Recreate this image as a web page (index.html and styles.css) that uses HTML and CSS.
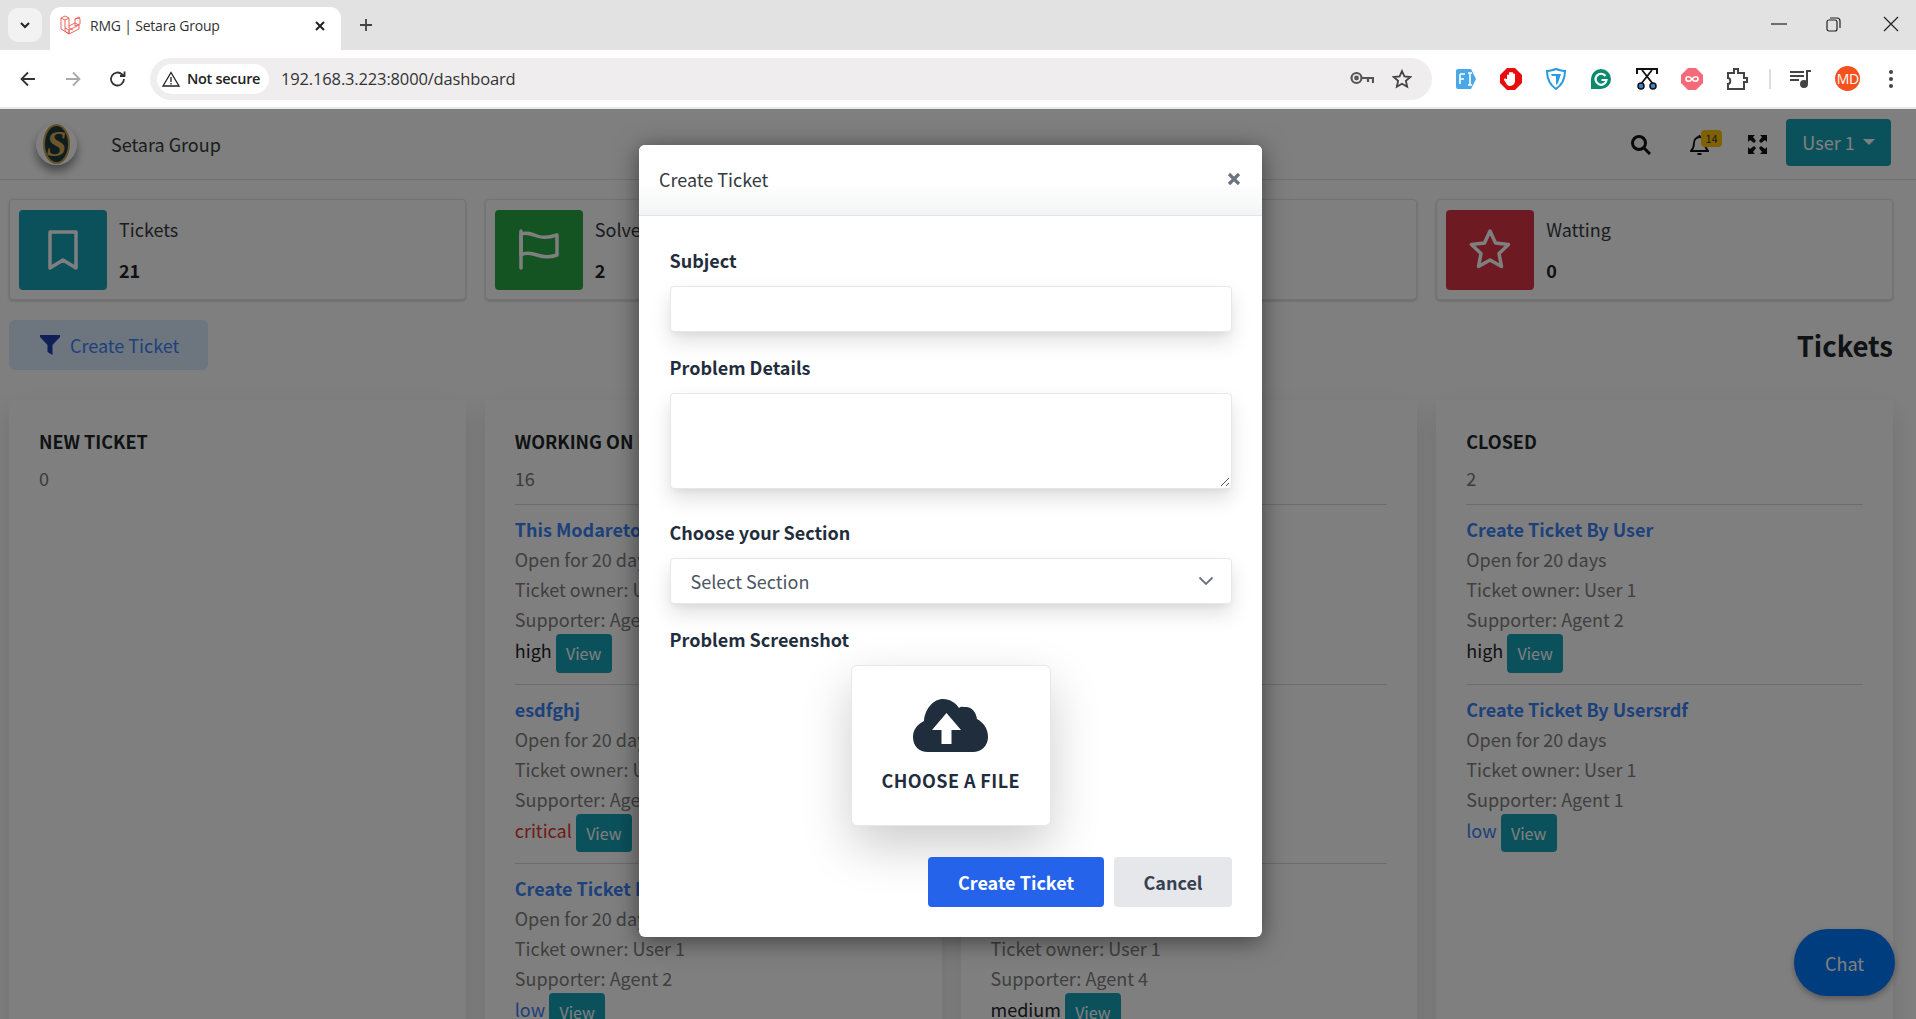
FILE: index.html
```html
<!DOCTYPE html>
<html lang="en">
<head>
<meta charset="utf-8">
<title>RMG | Setara Group</title>
<link rel="stylesheet" href="styles.css">
</head>
<body>
<header class="browser">
  <div class="tabstrip">
    <button class="tab-list"><svg width="14" height="14" viewBox="0 0 14 14"><path d="M3 5l4 4 4-4" fill="none" stroke="#222" stroke-width="2"/></svg></button>
    <div class="tab">
      <svg class="favicon" width="21" height="21" viewBox="0 0 21 21" fill="none" stroke="#f0635a" stroke-width="1"><path d="M1 3l4-2 4 2v10l4 2 M1 3v11l8 5 10-5v-4 M5 1v0M1 3l4 2 4-2M5 5v11l4 3v-4l-4-2M9 19v-4l10-5-4-2-6 3M15 4l4-2 1 2v5l-5 2V4l5-1"/></svg>
      <span class="tab-title">RMG | Setara Group</span>
      <svg class="tab-close" width="12" height="12" viewBox="0 0 12 12"><path d="M2 2l8 8M10 2l-8 8" stroke="#222" stroke-width="2"/></svg>
    </div>
    <svg class="new-tab" width="16" height="16" viewBox="0 0 16 16"><path d="M8 2v12M2 8h12" stroke="#444" stroke-width="1.8"/></svg>
    <div class="window-controls">
      <svg width="18" height="18" viewBox="0 0 18 18"><path d="M1 9h16" stroke="#222" stroke-width="1.2"/></svg>
      <svg width="18" height="18" viewBox="0 0 18 18" fill="none" stroke="#222" stroke-width="1.2"><rect x="3" y="5" width="10" height="11" rx="2"/><path d="M6 3h7a3 3 0 0 1 3 3v7"/></svg>
      <svg width="18" height="18" viewBox="0 0 18 18"><path d="M2 2l14 14M16 2L2 16" stroke="#222" stroke-width="1.2"/></svg>
    </div>
  </div>
  <div class="toolbar">
    <svg class="nav-ico" width="20" height="20" viewBox="0 0 20 20" fill="none" stroke="#333" stroke-width="1.8"><path d="M17 10H4M10 3.500L3.500 10l6.500 6.500"/></svg>
    <svg class="nav-ico" width="20" height="20" viewBox="0 0 20 20" fill="none" stroke="#aaa" stroke-width="1.800"><path d="M3 10h13M10 3.500l6.500 6.500-6.500 6.500"/></svg>
    <svg class="nav-ico" width="20" height="20" viewBox="0 0 20 20" fill="none" stroke="#333" stroke-width="1.800"><path d="M16 10a6.500 6.500 0 1 1-2-4.700L16 7M16.500 2.500V7H12"/></svg>
    <div class="omnibox">
      <div class="chip">
        <svg width="18" height="16" viewBox="0 0 18 16" fill="none" stroke="#222" stroke-width="1.300"><path d="M9 1.500L1 15h16zM9 6v5M9 12v1.500"/></svg>
        <span>Not secure</span>
      </div>
      <span class="url">192.168.3.223:8000/dashboard</span>
      <svg class="omni-key" width="24" height="15" viewBox="0 0 24 15" fill="none" stroke="#555" stroke-width="2.200"><circle cx="6.500" cy="7" r="5"/><circle cx="6.500" cy="7" r="1.300"/><path d="M11.500 7H23v5M18 7v4"/></svg>
      <svg class="omni-star" width="20" height="20" viewBox="0 0 20 20" fill="none" stroke="#444" stroke-width="1.800"><path d="M10 2l2.400 5.400 5.900.6-4.400 3.900 1.300 5.800L10 14.700l-5.200 3 1.300-5.800L1.700 8l5.900-.6z"/></svg>
    </div>
    <div class="extensions">
      <svg width="22" height="22" viewBox="0 0 22 22"><path d="M1 3a2 2 0 0 1 2-2h13l5 10-5 10H3a2 2 0 0 1-2-2z" fill="#4aa8e8"/><path d="M5 6v10M5 6h5M5 11h4M13 5h4M15 5v12M13 17h4" stroke="#fff" stroke-width="1.600" fill="none"/></svg>
      <svg width="22" height="22" viewBox="0 0 22 22"><path d="M7 0h8l7 7v8l-7 7H7l-7-7V7z" fill="#e80d0d"/><path d="M7 11V7.500a1 1 0 0 1 2 0V5a1 1 0 0 1 2 0V5a1 1 0 0 1 2 0v1.500a1 1 0 0 1 2 0V13a5 5 0 0 1-5 5c-2 0-3-1-4-3l-2-3c-.5-1 1-2 2-1z" fill="#fff"/></svg>
      <svg width="22" height="22" viewBox="0 0 22 22"><path d="M11 1c3 1 6 2 9 2 0 8-3 14-9 18C5 17 2 11 2 3c3 0 6-1 9-2z" fill="#fff" stroke="#2a9be0" stroke-width="2"/><path d="M6 6h10l-3 9-2 2V8H7z" fill="#2a9be0"/></svg>
      <svg width="22" height="22" viewBox="0 0 22 22"><path d="M11 1a10 10 0 1 1 0 20H1V11A10 10 0 0 1 11 1z" fill="#0b8a70"/><path d="M15.500 8a5.500 5.500 0 1 0 1 4h-5" fill="none" stroke="#fff" stroke-width="2.200"/></svg>
      <svg width="22" height="22" viewBox="0 0 22 22" fill="none"><path d="M1 6V1h20v5" stroke="#111" stroke-width="2"/><path d="M5 16L16 2M17 16L6 2" stroke="#111" stroke-width="1.800"/><circle cx="5" cy="18" r="3" stroke="#111" stroke-width="1.500" fill="#3b82d6"/><circle cx="17" cy="18" r="3" stroke="#111" stroke-width="1.500" fill="#3b82d6"/></svg>
      <svg width="22" height="22" viewBox="0 0 22 22"><path d="M7 0h8l7 7v8l-7 7H7l-7-7V7z" fill="#f56a78"/><path d="M11 11c-2-3-6-3-6 0s4 3 6 0 6-3 6 0-4 3-6 0z" fill="none" stroke="#fff" stroke-width="1.600"/></svg>
      <svg width="22" height="24" viewBox="0 0 22 24" fill="none" stroke="#444" stroke-width="2"><path d="M2 6h6V2h4v4h6v5h3v4h-3v7H2v-5c3 0 3-6 0-6z"/></svg>
      <span class="separator"></span>
      <svg class="ext-music" width="22" height="20" viewBox="0 0 22 20" fill="none" stroke="#444" stroke-width="2"><path d="M0 3h14M0 7h14M0 11h9M17 14V2h4"/><circle cx="14" cy="15" r="3" fill="#444"/></svg>
      <span class="avatar">MD</span>
      <svg class="ext-menu" width="6" height="20" viewBox="0 0 6 20" fill="#444"><circle cx="3" cy="3" r="2"/><circle cx="3" cy="10" r="2"/><circle cx="3" cy="17" r="2"/></svg>
    </div>
  </div>
</header>

<div class="page">
  <nav class="topnav">
    <div class="logo">
      <span class="logo-s">S</span>
    </div>
    <span class="brand">Setara Group</span>
    <div class="nav-right">
      <svg class="nav-search" width="21" height="21" viewBox="0 0 21 21" fill="none" stroke="#111" stroke-width="3"><circle cx="9" cy="9" r="6.500"/><path d="M14 14l6 6"/></svg>
      <div class="bell">
        <svg width="19" height="23" viewBox="0 0 19 23" fill="none" stroke="#111" stroke-width="1.800"><path d="M1 18h17c-2-2-3-4-3-8 0-3-2-6-5.500-6S4 7 4 10c0 4-1 6-3 8zM7.500 21h4M9.500 2v2"/></svg>
        <span class="badge">14</span>
      </div>
      <svg width="19" height="19" viewBox="0 0 19 19" fill="#111"><path d="M0 0h7L5 2l3 4-2 2-4-3-2 2zM19 0v7l-2-2-4 3-2-2 3-4-2-2zM0 19v-7l2 2 4-3 2 2-3 4 2 2zM19 19h-7l2-2-3-4 2-2 4 3 2-2z"/></svg>
      <button class="user-btn">User 1 <span class="caret"></span></button>
    </div>
  </nav>

  <main class="content">
    <section class="stats">
      <div class="stat">
        <div class="stat-icon teal"><svg width="48" height="48" viewBox="0 0 48 48" fill="none" stroke="#fff" stroke-width="3.500"><path d="M11 6h26v36l-13-8-13 8z" stroke-linejoin="round"/></svg></div>
        <div class="stat-text"><span class="stat-label">Tickets</span><b class="stat-num">21</b></div>
      </div>
      <div class="stat">
        <div class="stat-icon green"><svg width="48" height="48" viewBox="0 0 48 48" fill="none" stroke="#fff" stroke-width="3.500" stroke-linejoin="round" stroke-linecap="round"><path d="M6 5v37"/><path d="M6 8c6-2 11 0 16 2s11 2 20-1v20c-8 3-14 2-20 0s-11-3-16 0z"/></svg></div>
        <div class="stat-text"><span class="stat-label">Solved</span><b class="stat-num">2</b></div>
      </div>
      <div class="stat">
        <div class="stat-icon teal"></div>
        <div class="stat-text"><span class="stat-label">Pending</span><b class="stat-num">1</b></div>
      </div>
      <div class="stat">
        <div class="stat-icon red"><svg width="44" height="44" viewBox="0 0 44 44" fill="none" stroke="#fff" stroke-width="3.500" stroke-linejoin="round"><path d="M22 3l5.500 12 13 1.500-9.500 9 2.500 13L22 32l-11.500 6.500 2.500-13-9.500-9 13-1.500z"/></svg></div>
        <div class="stat-text"><span class="stat-label">Watting</span><b class="stat-num">0</b></div>
      </div>
    </section>

    <div class="action-row">
      <button class="filter-btn"><svg width="20" height="20" viewBox="0 0 20 20" fill="#1e40af"><path d="M0 0h20v2l-7.500 8v10l-5-3v-7L0 2z"/></svg>Create Ticket</button>
      <h1 class="page-title">Tickets</h1>
    </div>

    <section class="board">
      <div class="column">
        <h2 class="col-title">NEW TICKET</h2>
        <p class="col-count">0</p>
      </div>
      <div class="column">
        <h2 class="col-title">WORKING ON IT</h2>
        <p class="col-count">16</p>
        <article class="ticket">
          <a class="t-title">This Modaretor Ticket</a>
          <p>Open for 20 days</p><p>Ticket owner: User 1</p><p>Supporter: Agent 2</p>
          <div class="t-foot"><span class="p-high">high</span><button class="view-btn">View</button></div>
        </article>
        <article class="ticket">
          <a class="t-title">esdfghj</a>
          <p>Open for 20 days</p><p>Ticket owner: User 1</p><p>Supporter: Agent 2</p>
          <div class="t-foot"><span class="p-critical">critical</span><button class="view-btn">View</button></div>
        </article>
        <article class="ticket">
          <a class="t-title">Create Ticket By User</a>
          <p>Open for 20 days</p><p>Ticket owner: User 1</p><p>Supporter: Agent 2</p>
          <div class="t-foot"><span class="p-low">low</span><button class="view-btn">View</button></div>
        </article>
      </div>
      <div class="column">
        <h2 class="col-title">SOLVED</h2>
        <p class="col-count">2</p>
        <article class="ticket">
          <a class="t-title">Create Ticket</a>
          <p>Open for 20 days</p><p>Ticket owner: User 1</p><p>Supporter: Agent 4</p>
          <div class="t-foot"><span class="p-high">high</span><button class="view-btn">View</button></div>
        </article>
        <article class="ticket">
          <a class="t-title">Create Ticket</a>
          <p>Open for 20 days</p><p>Ticket owner: User 1</p><p>Supporter: Agent 4</p>
          <div class="t-foot"><span class="p-high">high</span><button class="view-btn">View</button></div>
        </article>
        <article class="ticket">
          <a class="t-title">Create Ticket</a>
          <p>Open for 20 days</p><p>Ticket owner: User 1</p><p>Supporter: Agent 4</p>
          <div class="t-foot"><span class="p-high">medium</span><button class="view-btn">View</button></div>
        </article>
      </div>
      <div class="column">
        <h2 class="col-title">CLOSED</h2>
        <p class="col-count">2</p>
        <article class="ticket">
          <a class="t-title">Create Ticket By User</a>
          <p>Open for 20 days</p><p>Ticket owner: User 1</p><p>Supporter: Agent 2</p>
          <div class="t-foot"><span class="p-high">high</span><button class="view-btn">View</button></div>
        </article>
        <article class="ticket">
          <a class="t-title">Create Ticket By Usersrdf</a>
          <p>Open for 20 days</p><p>Ticket owner: User 1</p><p>Supporter: Agent 1</p>
          <div class="t-foot"><span class="p-low">low</span><button class="view-btn">View</button></div>
        </article>
      </div>
    </section>
  </main>
  <button class="chat-btn">Chat</button>

  <div class="backdrop">
    <div class="modal">
      <div class="modal-head">
        <span class="modal-title">Create Ticket</span>
        <svg width="14" height="14" viewBox="0 0 14 14"><path d="M2 2l10 10M12 2L2 12" stroke="#6b7280" stroke-width="3.200"/></svg>
      </div>
      <form class="modal-body">
        <label class="f-label">Subject</label>
        <div class="f-input"></div>
        <label class="f-label">Problem Details</label>
        <div class="f-input f-area">
          <svg class="grip" width="10" height="10" viewBox="0 0 10 10"><path d="M1 9l8-8M6 9l3-3" stroke="#555" stroke-width="1"/></svg>
        </div>
        <label class="f-label">Choose your Section</label>
        <div class="f-input f-select">
          <span>Select Section</span>
          <svg width="16" height="10" viewBox="0 0 16 10" fill="none" stroke="#6b7280" stroke-width="1.800"><path d="M1.500 1.500L8 8l6.500-6.500"/></svg>
        </div>
        <label class="f-label">Problem Screenshot</label>
        <div class="file-wrap">
          <div class="file-box">
            <svg width="75" height="53" viewBox="0 0 75 53"><path d="M15 53C6 53 0 47 0 38 0 30 5 25 11 22 12 9 21 0 30 0c7 0 13 4 16 9 2-2 4-1 7-1 6 0 10 5 11 12 7 4 11 10 11 18 0 9-7 15-15 15z" fill="#1f2d3d"/><path d="M28.500 45V31H19l14.500-17L48 31h-9.500v14z" fill="#fff"/></svg>
            <span class="file-text">CHOOSE A FILE</span>
          </div>
        </div>
        <div class="modal-actions">
          <button type="button" class="btn-primary">Create Ticket</button>
          <button type="button" class="btn-cancel">Cancel</button>
        </div>
      </form>
    </div>
  </div>
</div>
</body>
</html>
```

FILE: styles.css
```css
* { box-sizing: border-box; }
html, body { margin: 0; height: 1019px; overflow: hidden; }
body { font-family: "Noto Sans CJK SC", "Noto Sans", sans-serif; background: #fff; color: #212529; }
button { font-family: inherit; border: 0; padding: 0; }
p, h1, h2 { margin: 0; }

/* browser chrome */
.browser { font-family: "Open Sans", "Noto Sans", sans-serif; height: 109px; }
.tabstrip { height: 50px; background: #e2e2e2; display: flex; align-items: flex-start; }
.tab-list { width: 34px; height: 34px; margin: 8px 8px 0 8px; border-radius: 10px; background: #f2f2f2; display: flex; align-items: center; justify-content: center; }
.tab { width: 291px; height: 43px; margin-top: 7px; background: #fff; border-radius: 11px 11px 0 0; display: flex; align-items: center; padding: 0 15px 6px 10px; }
.favicon { margin-right: 9px; }
.tab-title { flex: 1; font-size: 14px; letter-spacing: -0.2px; color: #333; }
.new-tab { margin: 17px 0 0 17px; }
.window-controls { margin-left: auto; display: flex; gap: 36px; padding: 15px 16px 0 0; }
.window-controls svg:last-child { margin-left: 4px; }
.toolbar { height: 59px; background: #fff; border-bottom: 2px solid #e9e9e9; display: flex; align-items: center; padding: 0 0 0 18px; border-radius: 10px 10px 0 0; }
.nav-ico { margin-right: 25px; }
.nav-ico:nth-child(3) { margin-right: 22px; }
.omnibox { width: 1282px; height: 42px; border-radius: 21px; background: #efedee; display: flex; align-items: center; padding: 0 20px 0 7px; flex: none; }
.chip { width: 112px; height: 30px; border-radius: 15px; background: #fff; display: flex; align-items: center; gap: 7px; padding-left: 5px; font-size: 14.500px; color: #222; font-weight: 600; letter-spacing: -0.3px; white-space: nowrap; }
.url { margin-left: 12px; font-size: 16.500px; color: #333; letter-spacing: -0.15px; }
.omni-key { margin-left: auto; margin-right: 18px; }
.extensions { display: flex; align-items: center; margin-left: 22.500px; gap: 23.300px; }
.separator { width: 2px; height: 20px; background: #ddd; margin: 0 -3px; }
.ext-music { margin-left: -1px; }
.avatar { width: 25px; height: 25px; border-radius: 50%; background: #f4511e; color: #fff; font-size: 14px; display: flex; align-items: center; justify-content: center; letter-spacing: -0.5px; }
.ext-menu { margin-left: 5px; }

/* page */
.page { position: relative; height: 910px; overflow: hidden; background: #fff; }
.topnav { height: 71px; border-bottom: 1px solid #dee2e6; display: flex; align-items: center; padding: 0 25px 0 36px; }
.logo { width: 41px; height: 41px; border-radius: 50%; background: #fff; box-shadow: 0 6px 10px rgba(0,0,0,.45); display: flex; align-items: center; justify-content: center; }
.logo-s { width: 27px; height: 40px; border-radius: 50%; background: #1f3a3d; border: 2px solid #c9a24a; color: #d8ae55; font: italic bold 36px/36px "Liberation Serif", serif; text-align: center; display: block; }
.brand { margin-left: 34px; font-size: 18px; line-height: 30px; color: #343a40; }
.nav-right { margin-left: auto; display: flex; align-items: center; }
.nav-search { margin-right: 39px; }
.bell { position: relative; width: 19px; height: 23px; margin-right: 39px; }
.bell svg { display: block; }
.badge { position: absolute; left: 11px; top: -3px; width: 21px; height: 17px; border-radius: 4px; background: #ffc107; color: #333; font-size: 11px; line-height: 17px; text-align: center; }
.user-btn { width: 105px; height: 47px; margin-left: 19px; margin-bottom: 4px; border-radius: 4px; background: #17a2b8; color: #fff; font-size: 18px; line-height: 30px; }
.caret { display: inline-block; width: 0; height: 0; margin-left: 4px; vertical-align: 5px; border-left: 6px solid transparent; border-right: 6px solid transparent; border-top: 6px solid #fff; }

.content { padding: 19px 23px 0 9px; }
.stats { display: grid; grid-template-columns: repeat(4, 1fr); gap: 19px; }
.stat { height: 101px; border-radius: 4px; background: #fff; border: 1px solid #e7e7e7; box-shadow: 0 1px 3px rgba(0,0,0,.2); display: flex; align-items: center; padding: 0 9px; }
.stat-icon { width: 88px; height: 80px; border-radius: 4px; display: flex; align-items: center; justify-content: center; flex: none; }
.teal { background: #17a2b8; }
.green { background: #28a745; }
.red { background: #dc3545; }
.stat-text { margin-left: 12px; display: flex; flex-direction: column; font-size: 18px; line-height: 30px; gap: 11px; }
.stat-label { color: #343a40; }
.stat-num { font-weight: 700; font-size: 18px; color: #212529; }

.action-row { display: flex; align-items: center; justify-content: space-between; margin-top: 20px; height: 50px; }
.filter-btn { width: 199px; height: 50px; border-radius: 6px; background: #dbeafe; color: #3b82f6; font-size: 18px; display: flex; align-items: center; gap: 10px; padding-left: 31px; }
.page-title { font-size: 27.500px; line-height: 40px; font-weight: 700; color: #212529; }

.board { display: grid; grid-template-columns: repeat(4, 1fr); gap: 19px; margin-top: 30px; }
.column { height: 700px; padding: 26px 30px 0; background: #fff; box-shadow: 0 10px 25px rgba(0,0,0,.12); }
.col-title { font-size: 18px; line-height: 30px; font-weight: 700; color: #212529; }
.col-count { margin-top: 7px; font-size: 18px; line-height: 30px; color: #777; padding-bottom: 11px; }
.ticket { border-top: 1px solid #d8d8d8; padding: 9px 0 11px; font-size: 18px; line-height: 30px; color: #808080; }
.t-title { display: block; font-weight: 700; color: #3b82f6; }
.t-foot { display: flex; align-items: flex-start; gap: 4px; height: 38.500px; line-height: 33px; }
.p-high { color: #212529; }
.p-critical { color: #e3342f; }
.p-low { color: #3b82f6; }
.view-btn { width: 56px; height: 38.500px; border-radius: 4px; background: #17a2b8; color: #fff; font-size: 16px; }
.chat-btn { position: absolute; left: 1794px; top: 820px; width: 101px; height: 67px; border-radius: 34px; background: #007bff; color: #fff; font-size: 18px; box-shadow: 0 3px 6px rgba(0,0,0,.3); }

/* modal */
.backdrop { position: absolute; inset: 0; background: rgba(0,0,0,.5); padding: 36px 0 0 639px; }
.modal { width: 623px; height: 792px; border-radius: 6px; background: #fff; box-shadow: 0 4px 24px rgba(0,0,0,.5); overflow: hidden; }
.modal-head { height: 71px; display: flex; align-items: center; justify-content: space-between; padding: 0 21px 2px 20px; border-bottom: 1px solid #e5e5e5; background: linear-gradient(#fff 55%, #f3f4f5); }
.modal-title { font-size: 18px; line-height: 30px; color: #343a40; }
.modal-body { padding: 0 30px 0 30.500px; display: flex; flex-direction: column; }
.f-label { font-size: 18px; line-height: 30px; font-weight: 700; color: #1f2d3d; margin-top: 29px; margin-bottom: 11px; flex: none; }
.f-input { height: 46px; margin-bottom: -9px; border: 1px solid #e5e7eb; border-radius: 4px; background: #fff; box-shadow: 0 10px 20px rgba(0,0,0,.12), 0 4px 6px -2px rgba(0,0,0,.05); flex: none; }
.f-area { height: 96px; position: relative; margin-bottom: -1px; }
.grip { position: absolute; right: 1px; bottom: 1px; }
.f-select { display: flex; align-items: center; justify-content: space-between; padding: 0 17px 1px 20px; font-size: 18px; color: #4b5563; }
.file-wrap { display: flex; justify-content: center; flex: none; }
.file-box { width: 200px; height: 161px; border: 1px solid #e5e7eb; border-radius: 6px; background: #fff; box-shadow: 0 20px 50px rgba(0,0,0,.2); display: flex; flex-direction: column; align-items: center; padding-top: 33px; }
.file-text { margin-top: 13px; font-size: 18px; line-height: 30px; font-weight: 700; letter-spacing: .4px; color: #1f2d3d; }
.modal-actions { display: flex; justify-content: flex-end; gap: 10px; margin-top: 31px; position: relative; }
.btn-primary { width: 176px; height: 50px; border-radius: 4px; background: #2563eb; color: #fff; font-size: 18px; font-weight: 700; }
.btn-cancel { width: 118px; height: 50px; border-radius: 4px; background: #e5e7eb; color: #374151; font-size: 18px; font-weight: 700; }
```
